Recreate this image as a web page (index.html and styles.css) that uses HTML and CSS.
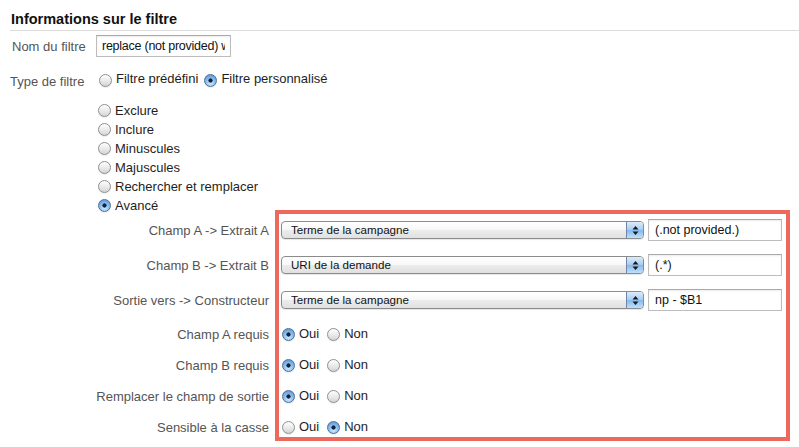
FILE: index.html
```
<!DOCTYPE html>
<html lang="fr">
<head>
<meta charset="utf-8">
<title>Informations sur le filtre</title>
<link rel="stylesheet" href="styles.css">
</head>
<body>
<div class="page">
  <h1 class="title">Informations sur le filtre</h1>

  <div class="name-row">
    <label class="field-label name-label" for="fname">Nom du filtre</label>
    <input id="fname" class="text name-input" type="text" value="replace (not provided) with keyword">
  </div>

  <div class="type-row">
    <span class="field-label type-label">Type de filtre</span>
    <label class="opt"><input class="radio" type="radio" name="type"><span>Filtre prédéfini</span></label>
    <label class="opt opt-second"><input class="radio" type="radio" name="type" checked><span>Filtre personnalisé</span></label>
  </div>

  <ul class="radio-list">
    <li><label class="opt"><input class="radio" type="radio" name="kind"><span>Exclure</span></label></li>
    <li><label class="opt"><input class="radio" type="radio" name="kind"><span>Inclure</span></label></li>
    <li><label class="opt"><input class="radio" type="radio" name="kind"><span>Minuscules</span></label></li>
    <li><label class="opt"><input class="radio" type="radio" name="kind"><span>Majuscules</span></label></li>
    <li><label class="opt"><input class="radio" type="radio" name="kind"><span>Rechercher et remplacer</span></label></li>
    <li><label class="opt"><input class="radio" type="radio" name="kind" checked><span>Avancé</span></label></li>
  </ul>

  <div class="advanced">
    <div class="adv-labels">
      <div class="sel-row">Champ A -&gt; Extrait A</div>
      <div class="sel-row">Champ B -&gt; Extrait B</div>
      <div class="sel-row">Sortie vers -&gt; Constructeur</div>
      <div class="radio-row">Champ A requis</div>
      <div class="radio-row">Champ B requis</div>
      <div class="radio-row">Remplacer le champ de sortie</div>
      <div class="radio-row">Sensible à la casse</div>
    </div>

    <div class="adv-box">
      <div class="sel-row">
        <div class="select">
          <select class="select-native"><option>Terme de la campagne</option></select>
          <span class="select-btn"><svg width="7" height="11" viewBox="0 0 7 11"><path d="M3.5 1 L6.5 4.5 L0.5 4.5 Z M3.5 10 L6.5 6.5 L0.5 6.5 Z" fill="#1a1a1a"/></svg></span>
        </div>
        <input class="text adv-input" type="text" value="(.not provided.)">
      </div>
      <div class="sel-row">
        <div class="select">
          <select class="select-native"><option>URI de la demande</option></select>
          <span class="select-btn"><svg width="7" height="11" viewBox="0 0 7 11"><path d="M3.5 1 L6.5 4.5 L0.5 4.5 Z M3.5 10 L6.5 6.5 L0.5 6.5 Z" fill="#1a1a1a"/></svg></span>
        </div>
        <input class="text adv-input" type="text" value="(.*)">
      </div>
      <div class="sel-row">
        <div class="select">
          <select class="select-native"><option>Terme de la campagne</option></select>
          <span class="select-btn"><svg width="7" height="11" viewBox="0 0 7 11"><path d="M3.5 1 L6.5 4.5 L0.5 4.5 Z M3.5 10 L6.5 6.5 L0.5 6.5 Z" fill="#1a1a1a"/></svg></span>
        </div>
        <input class="text adv-input" type="text" value="np - $B1">
      </div>
      <div class="radio-row">
        <label class="opt"><input class="radio" type="radio" name="a" checked><span>Oui</span></label>
        <label class="opt opt-non"><input class="radio" type="radio" name="a"><span>Non</span></label>
      </div>
      <div class="radio-row">
        <label class="opt"><input class="radio" type="radio" name="b" checked><span>Oui</span></label>
        <label class="opt opt-non"><input class="radio" type="radio" name="b"><span>Non</span></label>
      </div>
      <div class="radio-row">
        <label class="opt"><input class="radio" type="radio" name="c" checked><span>Oui</span></label>
        <label class="opt opt-non"><input class="radio" type="radio" name="c"><span>Non</span></label>
      </div>
      <div class="radio-row">
        <label class="opt"><input class="radio" type="radio" name="d"><span>Oui</span></label>
        <label class="opt opt-non"><input class="radio" type="radio" name="d" checked><span>Non</span></label>
      </div>
    </div>
  </div>
</div>
</body>
</html>
```
FILE: styles.css
```
* { box-sizing: border-box; }

html, body {
  margin: 0;
  padding: 0;
  background: #ffffff;
}

body {
  font-family: "Liberation Sans", Arial, sans-serif;
  font-size: 13px;
  color: #1e1e1e;
}

.page {
  padding-left: 10px;
}

.title {
  margin: 0;
  padding: 10px 0 2px 1px;
  font-size: 14.5px;
  line-height: 18px;
  font-weight: bold;
  color: #111;
  border-bottom: 1px solid #dcdcdc;
}

.field-label {
  color: #555;
  font-size: 13px;
}

.name-row {
  display: flex;
  align-items: center;
  margin-top: 4px;
  height: 22px;
}

.name-label {
  width: 86px;
  padding-left: 2px;
}

.text {
  font-family: "Liberation Sans", Arial, sans-serif;
  color: #111;
  border: 1px solid #bdbdbd;
  border-top-color: #a9a9a9;
  box-shadow: inset 0 1px 2px rgba(0, 0, 0, 0.08);
  background: #fff;
  outline: none;
  margin: 0;
}

.name-input {
  width: 135px;
  height: 22px;
  padding: 0 5px;
  font-size: 12.5px;
  letter-spacing: -0.25px;
}

.type-row {
  display: flex;
  align-items: center;
  height: 20px;
  margin-top: 13px;
}

.type-label {
  width: 89px;
  padding-top: 3px;
}

.opt {
  display: inline-flex;
  align-items: center;
  gap: 4px;
  color: #1e1e1e;
  font-size: 13px;
  line-height: 16px;
}

.type-row .opt span {
  margin-top: -2px;
}

.opt-second {
  margin-left: 6px;
}

.radio {
  appearance: none;
  -webkit-appearance: none;
  width: 13px;
  height: 13px;
  margin: 0;
  border-radius: 50%;
  border: 1px solid #8f8f8f;
  background: linear-gradient(#fefefe, #e9e9e9 55%, #d4d4d4);
  box-shadow: 0 1px 1px rgba(0, 0, 0, 0.08);
  flex: none;
}

.radio:checked {
  border-color: #4f6f98;
  background:
    radial-gradient(circle at 50% 50%, #15233a 0 1.8px, transparent 2.4px),
    radial-gradient(circle at 50% 75%, #cfeaff 0, #8cc0ee 45%, #4c8ad6 100%);
}

.radio-list {
  list-style: none;
  margin: 11px 0 0;
  padding: 0 0 0 88px;
}

.radio-list li {
  height: 19px;
  display: flex;
  align-items: center;
}

.advanced {
  display: flex;
  margin-top: -5px;
}

.adv-labels {
  width: 265px;
  padding: 9px 6px 0 0;
  text-align: right;
  color: #555;
  font-size: 13px;
}

.adv-labels .sel-row,
.adv-labels .radio-row {
  justify-content: flex-end;
}

.adv-box {
  width: 515px;
  border: 4px solid #ee695d;
  padding: 5px 0 0 2px;
  height: 231px;
}

.sel-row {
  display: flex;
  align-items: center;
  gap: 4px;
  height: 22px;
  margin-bottom: 13px;
}

.radio-row {
  display: flex;
  align-items: center;
  height: 20px;
  margin-bottom: 11px;
}

.adv-box .radio-row {
  padding-left: 1px;
}

.radio-row:last-child {
  margin-bottom: 0;
}

.opt-non {
  margin-left: 8px;
}

.select {
  display: flex;
  width: 363px;
  height: 18px;
  border: 1px solid #8b8b8b;
  border-radius: 4px;
  overflow: hidden;
  background: linear-gradient(#ffffff, #f7f7f7 50%, #ececec 51%, #e0e0e0);
  box-shadow: 0 1px 1px rgba(0, 0, 0, 0.1);
}

.select-native {
  appearance: none;
  -webkit-appearance: none;
  flex: 1;
  border: none;
  background: transparent;
  font-family: "Liberation Sans", Arial, sans-serif;
  font-size: 11.6px;
  color: #111;
  padding: 0 0 0 9px;
  margin: 0;
  height: 16px;
  line-height: 16px;
  outline: none;
}

.select-btn {
  width: 17px;
  display: flex;
  align-items: center;
  justify-content: center;
  border-left: 1px solid #6f86a6;
  background: linear-gradient(#dcecfb, #a8cdf1 48%, #86b9ec 52%, #bfe0fb);
}

.adv-input {
  width: 134px;
  height: 22px;
  padding: 0 6px;
  font-size: 12.5px;
}
```
